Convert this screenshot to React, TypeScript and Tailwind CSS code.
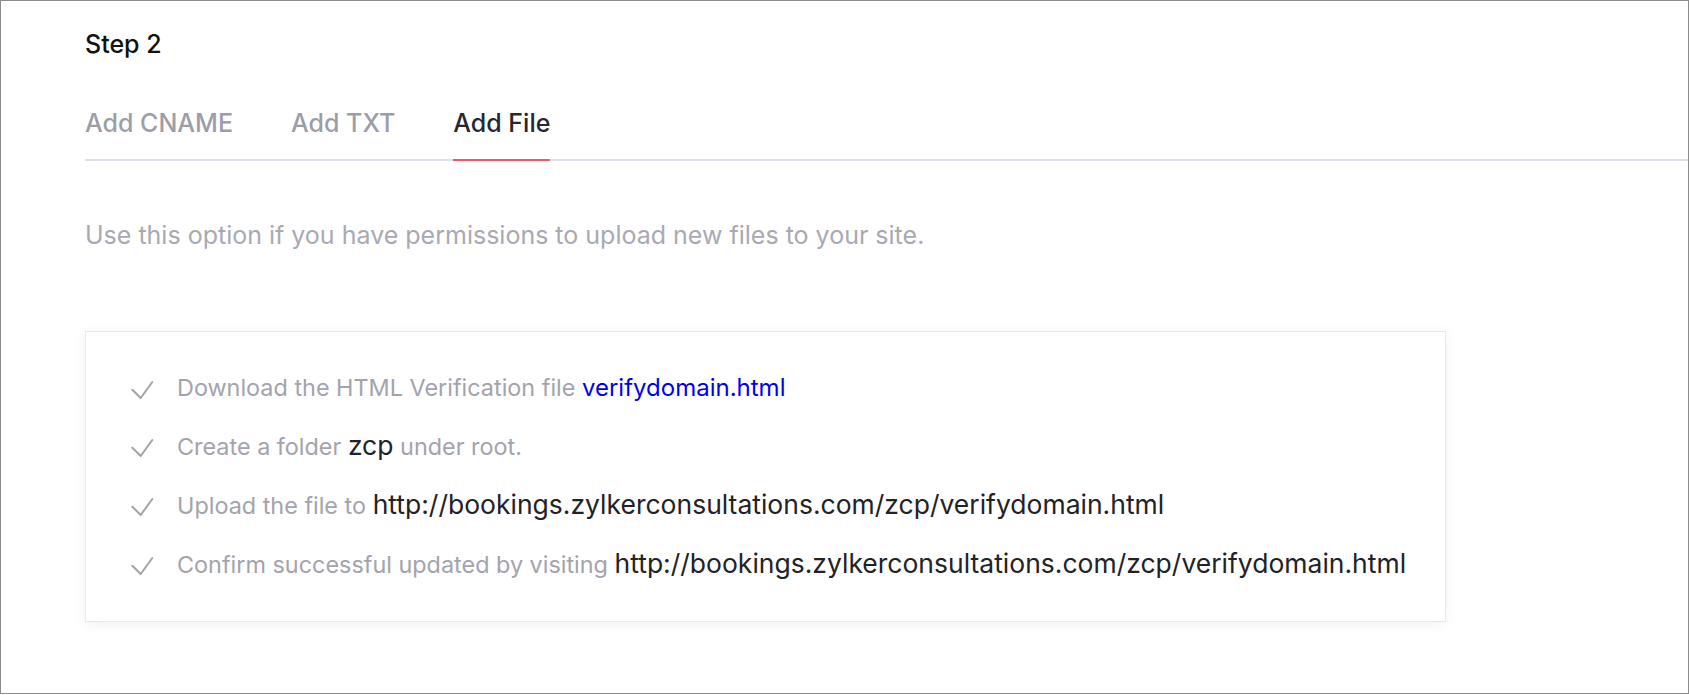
import React from 'react';

const tabs = ['Add CNAME', 'Add TXT', 'Add File'];

const URL = 'http://bookings.zylkerconsultations.com/zcp/verifydomain.html';

// thin grey tick used in front of every step
const Tick = () => (
  <svg viewBox="0 0 24 20" className="w-[24px] h-[20px] mt-[10px] shrink-0" fill="none">
    <polyline points="2.3,9.7 10.7,18 22.3,2" stroke="#a3a3ab" strokeWidth="2" strokeLinecap="round" strokeLinejoin="round" />
  </svg>
);

const Dark = ({ children }: { children: React.ReactNode }) => (
  <span className="text-[26.5px] leading-[34px] text-[#222226]">{children}</span>
);

const App = () => {
  const active = 'Add File';

  const steps: React.ReactNode[] = [
    <>
      Download the HTML Verification file <span className="text-[24px] text-[#0000ee]">verifydomain.html</span>
    </>,
    <>
      Create a folder <Dark>zcp</Dark> under root.
    </>,
    <>
      Upload the file to <Dark>{URL}</Dark>
    </>,
    <>
      Confirm successful updated by visiting <Dark>{URL}</Dark>
    </>
  ];

  return (
    <div className="h-[694px] w-full border border-[#8c8c8c] bg-white font-['Inter',sans-serif] overflow-hidden">
      <div className="pl-[84px]">
        {/* Step title */}
        <h2 className="pt-[28px] text-[25px] leading-[30px] font-medium text-[#111]">Step 2</h2>

        {/* Tabs */}
        <div className="mt-[49px] flex gap-[58px] border-b-2 border-[#dfdfea]">
          {tabs.map((t) => (
            <div
              key={t}
              className={
                t === active
                  ? 'pb-[21px] -mb-[2px] border-b-2 border-[#ef5a6b] text-[25px] leading-[30px] font-medium text-[#27272f]'
                  : 'pb-[21px] -mb-[2px] border-b-2 border-transparent text-[25px] leading-[30px] font-medium text-[#9d9da8]'
              }
            >
              {t}
            </div>
          ))}
        </div>

        {/* Description */}
        <p className="mt-[59px] text-[25px] leading-[30px] text-[#a9a9b3]">
          Use this option if you have permissions to upload new files to your site.
        </p>

        {/* Instructions card */}
        <div className="mt-[81px] w-[1361px] border border-[#e9e9e9] bg-white shadow-[0_2px_12px_rgba(0,0,0,0.06)] pl-[44px] pt-[38px] pb-[38px] flex flex-col gap-[22px]">
          {steps.map((s, i) => (
            <div key={i} className="flex items-start gap-[23px]">
              <Tick />
              <div className="text-[23.4px] leading-[36px] text-[#a3a3ad] whitespace-nowrap">{s}</div>
            </div>
          ))}
        </div>
      </div>
    </div>
  );
};

export default App;
